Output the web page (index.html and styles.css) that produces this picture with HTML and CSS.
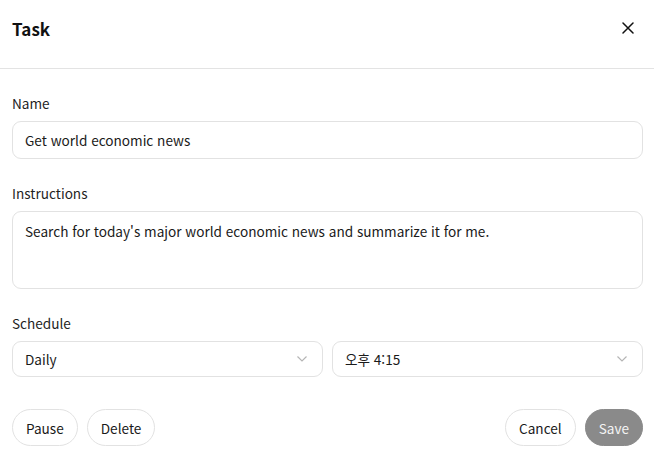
FILE: index.html
```html
<!DOCTYPE html>
<html lang="ko">
<head>
<meta charset="utf-8">
<link rel="stylesheet" href="styles.css">
</head>
<body>
<div class="dialog">
  <header class="header">
    <h1 class="title">Task</h1>
    <button class="close" aria-label="Close">
      <svg width="12" height="12" viewBox="0 0 12 12"><path d="M1 1L11 11M11 1L1 11" stroke="#111" stroke-width="1.5" stroke-linecap="round"/></svg>
    </button>
  </header>
  <main class="body">
    <div class="field">
      <label class="label">Name</label>
      <div class="input">Get world economic news</div>
    </div>
    <div class="field">
      <label class="label">Instructions</label>
      <div class="textarea">Search for today's major world economic news and summarize it for me.</div>
    </div>
    <div class="field">
      <label class="label">Schedule</label>
      <div class="selects">
        <div class="select"><span>Daily</span>
          <svg width="12" height="8" viewBox="0 0 12 8"><path d="M1.5 1.5L6 6L10.5 1.5" fill="none" stroke="#b5b5b5" stroke-width="1.2"/></svg>
        </div>
        <div class="select"><span>오후 4:15</span>
          <svg width="12" height="8" viewBox="0 0 12 8"><path d="M1.5 1.5L6 6L10.5 1.5" fill="none" stroke="#b5b5b5" stroke-width="1.2"/></svg>
        </div>
      </div>
    </div>
    <div class="actions">
      <div class="group">
        <button class="btn">Pause</button>
        <button class="btn">Delete</button>
      </div>
      <div class="group">
        <button class="btn">Cancel</button>
        <button class="btn primary">Save</button>
      </div>
    </div>
  </main>
</div>
</body>
</html>
```
FILE: styles.css
```css
* { box-sizing: border-box; }
html, body { margin: 0; padding: 0; background: #fff; }
body {
  font-family: "Noto Sans CJK KR", "Noto Sans", sans-serif;
  font-size: 13.6px;
  color: #1a1a1a;
  width: 654px;
  height: 460px;
  overflow: hidden;
}
.header {
  height: 69px;
  border-bottom: 1px solid #e3e3e3;
  display: flex;
  align-items: center;
  justify-content: space-between;
  padding: 0 20px 12px 12px;
}
.title {
  margin: 0;
  font-size: 17px;
  font-weight: 700;
  color: #111;
}
.close {
  border: 0;
  background: none;
  padding: 0;
  width: 12px;
  height: 12px;
  display: flex;
}
.body {
  padding: 24px 11px 0 12px;
}
.field { display: flex; flex-direction: column; margin-bottom: 24px; }
.label { line-height: 20px; margin-bottom: 8px; color: #1f1f1f; }
.input, .textarea, .select {
  border: 1px solid #e2e2e2;
  border-radius: 9px;
  color: #1a1a1a;
}
.input { height: 38px; padding: 0 12px; display: flex; align-items: center; }
.textarea { height: 78px; padding: 9px 12px; line-height: 20px; }
.selects { display: flex; gap: 9px; }
.select {
  flex: 1;
  height: 36px;
  padding: 0 14px 0 12px;
  display: flex;
  align-items: center;
  justify-content: space-between;
}
.actions {
  display: flex;
  justify-content: space-between;
  margin-top: 32px;
}
.group { display: flex; gap: 9px; }
.btn {
  font-family: inherit;
  font-size: 13.6px;
  color: #1a1a1a;
  background: #fff;
  border: 1px solid #e2e2e2;
  border-radius: 19px;
  height: 37px;
  padding: 0 13px;
}
.btn.primary {
  background: #8a8a8a;
  border-color: #8a8a8a;
  color: #f4f4f4;
}
```
